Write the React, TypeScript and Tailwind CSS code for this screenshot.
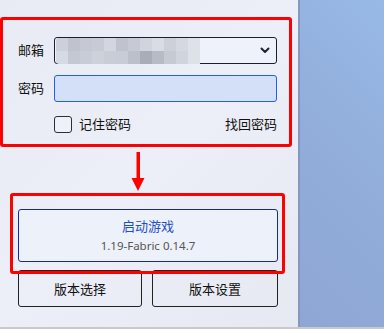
const mosaic = [
  ["#ccd0da", "#bfc3cd", "#c5c9d3", "#c7cbd5", "#d2d6de", "#bfc3cd", "#c6cad4", "#d0d4dc", "#d8dce4", "#ccd0d9", "#d4d8e0", "#dde1e8"],
  ["#d6dae2", "#c4c8d2", "#c8ccd6", "#cdd1da", "#c9cdd6", "#c8ccd6", "#bcc0ca", "#a9adb8", "#b7bbc5", "#c6cad3", "#d0d4dc", "#dde1e8"],
];

const font = { fontFamily: '"Noto Sans", "Noto Sans CJK SC", sans-serif' };

function Chevron() {
  return (
    <svg width="10" height="7" viewBox="0 0 10 7" className="shrink-0">
      <path d="M1.5 1.5 L5 5 L8.5 1.5" fill="none" stroke="#1f2433" strokeWidth="2" strokeLinecap="round" strokeLinejoin="round" />
    </svg>
  );
}

function ArrowDown() {
  return (
    <svg width="16" height="40" viewBox="0 0 16 40">
      <rect x="6.5" y="0" width="3.5" height="28" fill="#f00" />
      <path d="M1.5 26 L14.5 26 L8 39 Z" fill="#f00" />
    </svg>
  );
}

export default function App() {
  return (
    <div className="flex flex-col w-[384px] h-[329px] overflow-hidden" style={font}>
      <div className="flex flex-1">
        {/* launcher panel */}
        <div className="w-[298px] shrink-0 flex flex-col bg-[linear-gradient(135deg,#e8ebf3_0%,#eceff7_50%,#e6e9f2_100%)]">
          <div className="mt-[17px] w-[292px] border-[3px] border-[#ff0000] rounded-[3px] pl-[15px] pr-[12px] pt-[17px] pb-[11px]">
            <div className="flex items-center h-[27px]">
              <span className="w-[36px] text-[13px] text-[#111]">邮箱</span>
              <div className="flex-1 h-[27px] flex items-center border border-[#1a1f2e] rounded-[3px] bg-[#eef2fa] pl-[1px] pr-[6px]">
                <div className="flex flex-col blur-[0.6px] rounded-l-[3px] overflow-hidden">
                  {mosaic.map((row, r) => (
                    <div key={r} className="flex">
                      {row.map((c, i) => (
                        <div key={i} className="w-[12px] h-[13px]" style={{ backgroundColor: c }} />
                      ))}
                    </div>
                  ))}
                </div>
                <div className="flex-1" />
                <Chevron />
              </div>
            </div>
            <div className="flex items-center h-[27px] mt-[11px]">
              <span className="w-[36px] text-[13px] text-[#111]">密码</span>
              <div className="flex-1 h-[27px] border border-[#2160e8] rounded-[3px] bg-[#d3e0f8]" />
            </div>
            <div className="flex items-center h-[17px] mt-[14px] pl-[36px]">
              <div className="w-[18px] h-[17px] border-[1.5px] border-[#2a2f3a] rounded-[3px] bg-[#eef1f8]" />
              <span className="ml-[7px] text-[13px] text-[#111]">记住密码</span>
              <div className="flex-1" />
              <span className="text-[13px] text-[#111]">找回密码</span>
            </div>
          </div>

          <div className="flex justify-center w-[292px] pt-[5px] h-[46px] pr-[16px]">
            <ArrowDown />
          </div>

          <div className="relative z-10 ml-[10px] w-[275px] border-[3px] border-[#ff0000] rounded-[3px] pl-[5px] pr-[4px] pt-[13px] pb-[9px]">
            <button className="w-full h-[53px] flex flex-col items-center justify-center border border-[#1a2a95] rounded-[3px] bg-[#edf1f9]">
              <span className="text-[13px] leading-[18px] text-[#1f4fc4]">启动游戏</span>
              <span className="text-[11.5px] leading-[17px] text-[#555] mt-[2px]">1.19-Fabric 0.14.7</span>
            </button>
          </div>

          <div className="flex gap-[10px] ml-[18px] -mt-[4px]">
            <button className="w-[124px] h-[37px] border border-[#222] rounded-[3px] text-[13px] text-[#111] pt-[3px]">版本选择</button>
            <button className="w-[126px] h-[37px] border border-[#222] rounded-[3px] text-[13px] text-[#111] pt-[3px]">版本设置</button>
          </div>
        </div>

        {/* desktop background */}
        <div className="flex-1 border-l-2 border-[#8598c2] bg-[linear-gradient(45deg,#8ea6d4_0%,#92add9_50%,#98b9e7_100%)]" />
      </div>
      <div className="h-[2px] bg-[#c9c9c9]" />
    </div>
  );
}
